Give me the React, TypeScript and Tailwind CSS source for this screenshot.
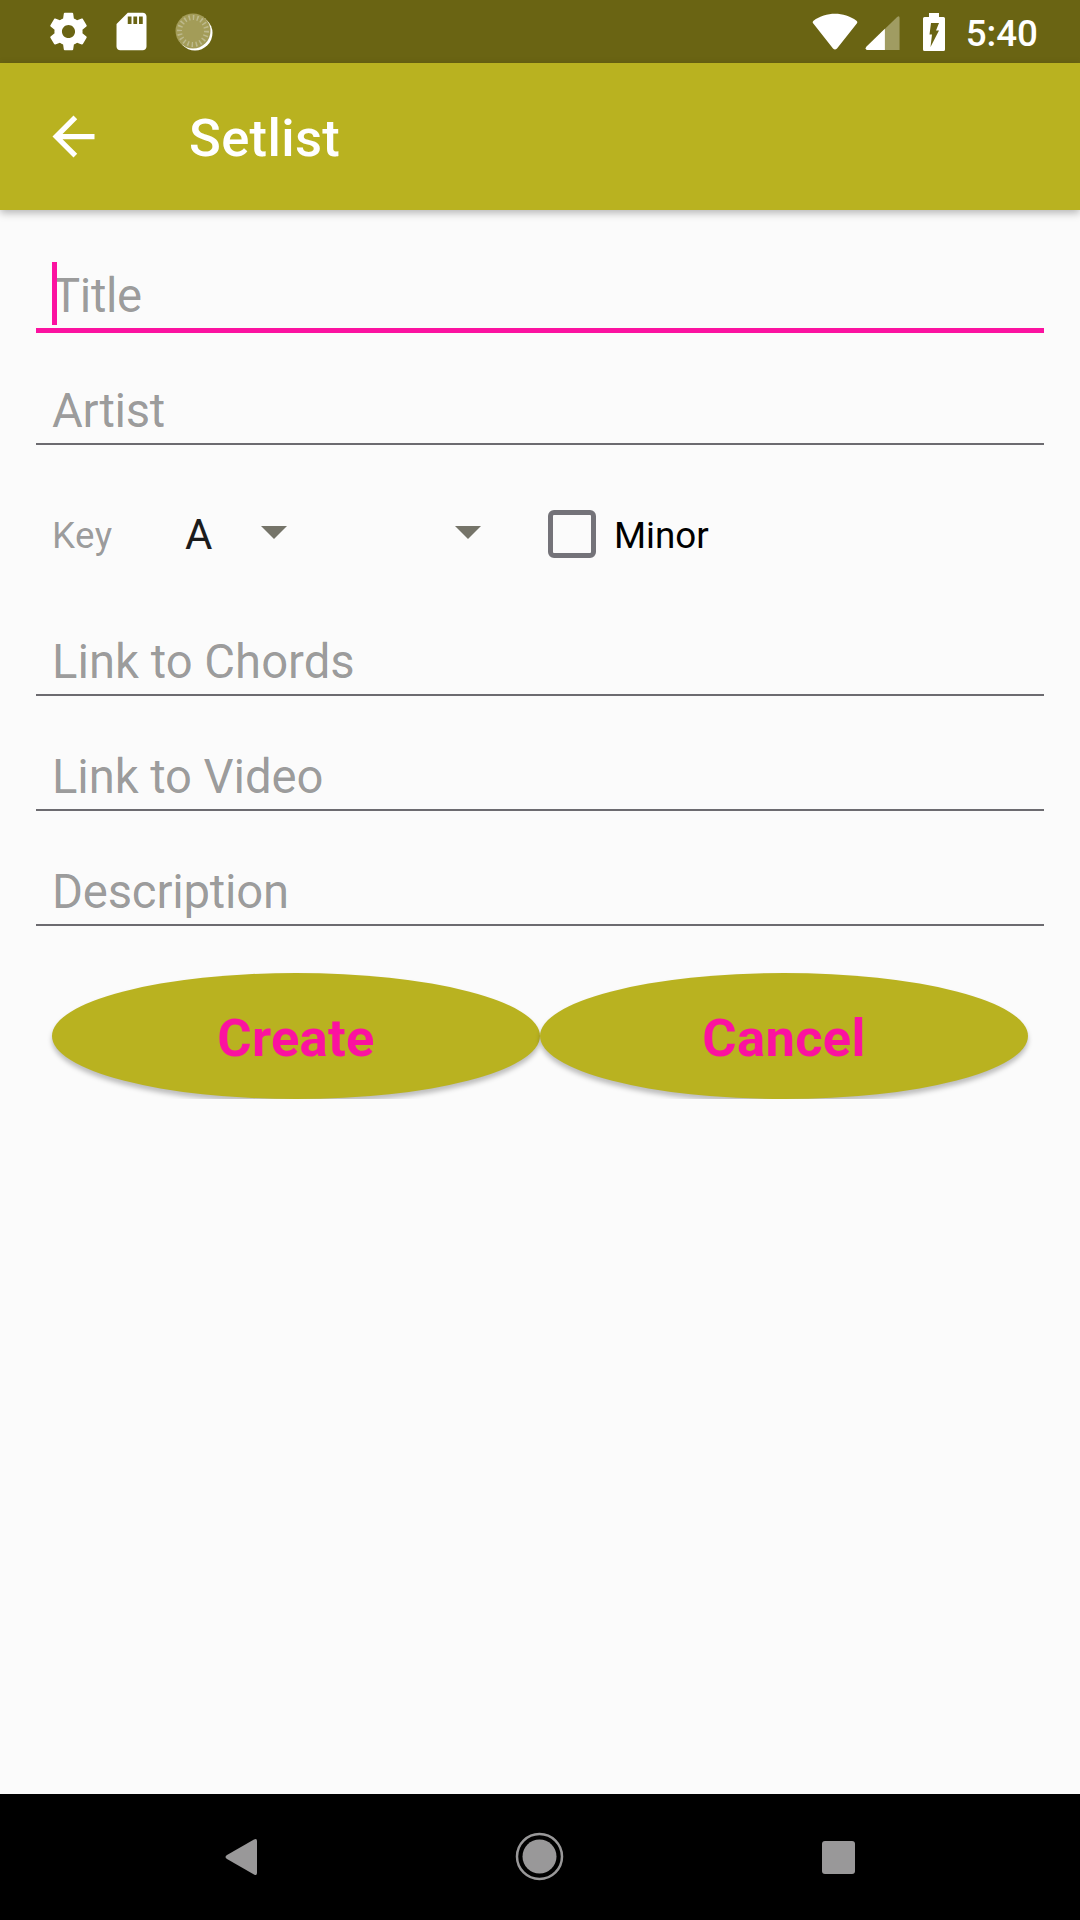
import React from "react";

type FieldProps = { label: string; tracking?: string; focused?: boolean };

function Field({ label, tracking = "tracking-normal", focused = false }: FieldProps) {
  return (
    <div className="relative flex h-[115px] flex-col px-4">
      {focused && <span className="absolute left-4 top-[22px] h-[63px] w-[5px] bg-[#fb12a0]" />}
      <span className={`mt-7 h-[60px] text-[47.25px] leading-[56px] text-black/40 ${tracking}`}>
        {label}
      </span>
      <span
        className={
          focused ? "-mx-4 h-[5px] bg-[#fb12a0]" : "-mx-4 h-[2px] bg-[#6c6b70]"
        }
      />
    </div>
  );
}

function Caret() {
  return (
    <svg width="26" height="13" viewBox="0 0 26 13" className="mb-[7px] shrink-0">
      <path d="M0 0h26L13 13z" fill="#757469" />
    </svg>
  );
}

function StatusBar() {
  return (
    <header className="flex h-[63px] shrink-0 items-center bg-[#6a6413] text-white">
      <svg className="ml-[46px] shrink-0" width="45" height="45" viewBox="0 0 24 24" fill="#fff">
        <path d="M19.43 12.98c.04-.32.07-.64.07-.98s-.03-.66-.07-.98l2.11-1.65c.19-.15.24-.42.12-.64l-2-3.46c-.12-.22-.39-.3-.61-.22l-2.49 1c-.52-.4-1.08-.73-1.69-.98l-.38-2.65C14.46 2.18 14.25 2 14 2h-4c-.25 0-.46.18-.49.42l-.38 2.65c-.61.25-1.17.59-1.69.98l-2.49-1c-.23-.09-.49 0-.61.22l-2 3.46c-.13.22-.07.49.12.64l2.11 1.65c-.04.32-.07.65-.07.98s.03.66.07.98l-2.11 1.65c-.19.15-.24.42-.12.64l2 3.46c.12.22.39.3.61.22l2.49-1c.52.4 1.08.73 1.69.98l.38 2.65c.03.24.24.42.49.42h4c.25 0 .46-.18.49-.42l.38-2.65c.61-.25 1.17-.59 1.69-.98l2.49 1c.23.09.49 0 .61-.22l2-3.46c.12-.22.07-.49-.12-.64l-2.11-1.65zM12 15.5c-1.93 0-3.5-1.57-3.5-3.5s1.57-3.5 3.5-3.5 3.5 1.57 3.5 3.5-1.57 3.5-3.5 3.5z" />
      </svg>
      <svg className="ml-[18px] shrink-0" width="45" height="45" viewBox="0 0 24 24" fill="#fff">
        <path d="M18 2h-8L4.020 8 4 20c0 1.100.9 2 2 2h12c1.100 0 2-.9 2-2V4c0-1.100-.9-2-2-2zm-6 6h-2V4h2v4zm3 0h-2V4h2v4zm3 0h-2V4h2v4z" />
      </svg>
      <svg className="ml-[21px] shrink-0" width="38" height="40" viewBox="0 0 38 40">
        <circle cx="20" cy="21" r="17.500" fill="#fff" />
        <circle cx="18" cy="19" r="17.500" fill="#a39c58" />
        <circle cx="18" cy="19" r="13.500" fill="none" stroke="#bdb98c" strokeWidth="5" strokeDasharray="1.500 2.700" />
      </svg>
      <svg className="ml-auto shrink-0" width="46" height="40" viewBox="0 0 46 40" fill="#fff">
        <path d="M1.300 11.500Q0 10 1.500 8.800C14-0.500 32-0.500 44.500 8.800Q46 10 44.800 11.500L25 36.500Q23 38.500 21 36.500Z" />
      </svg>
      <svg className="ml-[7px] mt-[2px] shrink-0" width="35" height="36" viewBox="0 0 36 38">
        <path d="M2 37Q-1 36 1 33.500L33.500 2Q36 0 36 3V37Z" fill="#a09c62" />
        <path d="M2 37Q-1 36 1 33.500L20.500 14.500V37Z" fill="#fff" />
      </svg>
      <svg className="ml-[23px] shrink-0" width="22" height="38" viewBox="0 0 22 38">
        <path d="M6 0h10v4h4.500Q22 4 22 5.500v31Q22 38 20.500 38h-19Q0 38 0 36.500v-31Q0 4 1.500 4H6z" fill="#fff" />
        <path d="M8 10h8l-3 7.500h3L7.500 34 9 21.500H6.500z" fill="#6a6413" />
      </svg>
      <span className="ml-[21px] mr-[42px] pt-1 text-[36.75px] font-medium leading-[44px]">5:40</span>
    </header>
  );
}

export default function App() {
  return (
    <div className="flex h-[1920px] w-[1080px] flex-col overflow-hidden bg-[#fbfbfb] font-[Roboto,sans-serif]">
      <StatusBar />
      <div className="flex h-[147px] shrink-0 items-center bg-[#b9b220] text-white shadow-[0_3px_8px_rgba(0,0,0,0.28)]">
        <svg className="ml-[42px] shrink-0" width="63" height="63" viewBox="0 0 24 24" fill="#fff">
          <path d="M20 11H7.830l5.590-5.590L12 4l-8 8 8 8 1.410-1.410L7.830 13H20v-2z" />
        </svg>
        <h1 className="ml-[84px] pt-[3px] text-[52.5px] font-medium leading-[62px] tracking-[0.35px]">Setlist</h1>
      </div>

      <main className="flex flex-1 flex-col px-9 pt-[30px]">
        <Field label="Title" tracking="tracking-[-0.4px]" focused />
        <Field label="Artist" tracking="tracking-[-0.3px]" />
        <div className="mb-3 mt-2 flex h-[116px] items-center">
          <span className="ml-4 w-[134px] pb-px text-[36.75px] leading-[44px] tracking-[0.4px] text-black/40">Key</span>
          <span className="w-[75px] pb-[2px] text-[42px] leading-[50px] text-[#1c1c1c]">
            <span className="-ml-px">A</span>
          </span>
          <Caret />
          <span className="w-[168px]" />
          <Caret />
          <span className="mb-1 ml-[67px] size-12 rounded-[6px] border-[5px] border-[#747379]" />
          <span className="ml-[18px] pb-px text-[36.75px] leading-[44px] text-black">Minor</span>
        </div>
        <Field label="Link to Chords" />
        <Field label="Link to Video" tracking="tracking-[-0.1px]" />
        <Field label="Description" tracking="tracking-[-0.2px]" />
        <div className="mx-2 mt-[18px] flex overflow-hidden px-2 pt-1">
          {["Create", "Cancel"].map((label) => (
            <button
              key={label}
              className="h-[126px] flex-1 rounded-[50%] bg-[#b9b220] pt-1 text-[52.5px] font-bold tracking-[0.3px] text-[#fb12a0] shadow-[0_4px_5px_rgba(0,0,0,0.25)]"
            >
              {label}
            </button>
          ))}
        </div>
      </main>

      <nav className="flex h-[126px] shrink-0 items-center bg-black">
        <svg className="ml-[224px]" width="34" height="38" viewBox="0 0 34 38">
          <path d="M30 1.500Q33 0 33 3V35Q33 38 30 36.500L3 21Q0 19 3 17Z" fill="#999899" />
        </svg>
        <svg className="ml-[256px]" width="50" height="50" viewBox="0 0 50 50">
          <circle cx="25.500" cy="24.500" r="22.500" fill="none" stroke="#999899" strokeWidth="2.500" />
          <circle cx="25.500" cy="24.500" r="17" fill="#999899" />
        </svg>
        <span className="ml-[258px] h-[33px] w-[33px] rounded-[3px] bg-[#999899]" />
      </nav>
    </div>
  );
}
